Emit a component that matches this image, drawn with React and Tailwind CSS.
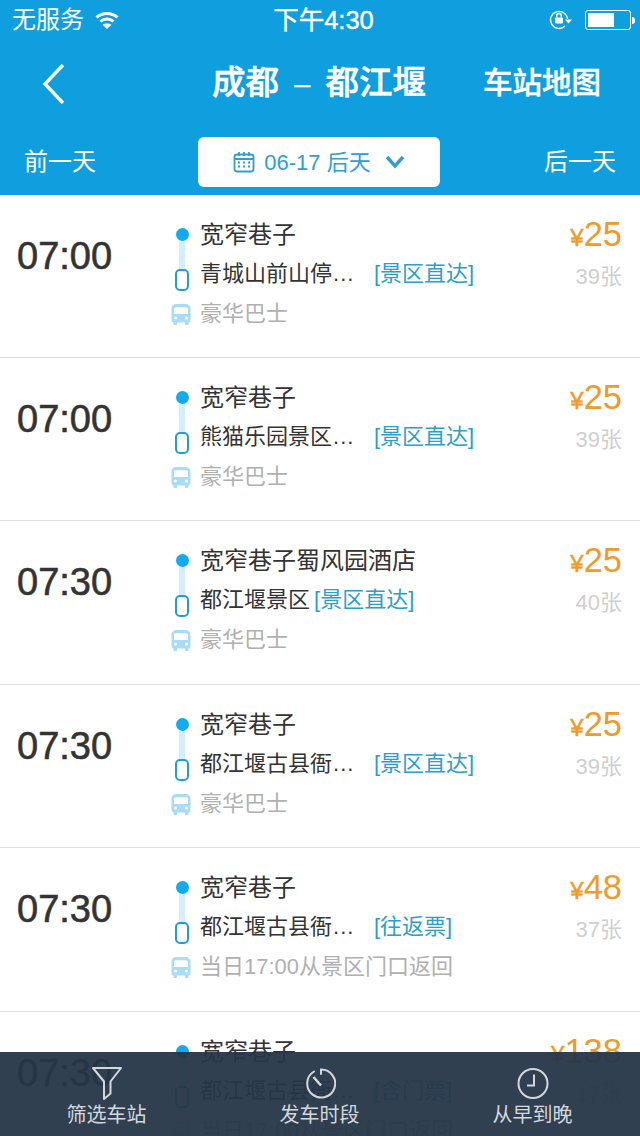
const FONT = { fontFamily: '"Liberation Sans", "Noto Sans CJK SC", sans-serif' };

function Wifi() {
  return (
    <svg width="24" height="20" viewBox="0 0 24 20" fill="none" stroke="white" strokeWidth="3">
      <path d="M1.5 7.5 C7 2 17 2 22.5 7.5" />
      <path d="M5.5 11.5 C9 8.2 15 8.2 18.5 11.5" />
      <path d="M12 19 L7.5 14.8 C10 13 14 13 16.5 14.8 Z" fill="white" stroke="none" />
    </svg>
  );
}

function RotationLock() {
  return (
    <svg width="24" height="22" viewBox="0 0 24 22" fill="none" stroke="white" strokeWidth="1.4">
      <path d="M18.5 10 A8.5 8.5 0 1 0 16 17" />
      <path d="M16 10.5 L23 10.5 L19.5 14.5 Z" fill="white" stroke="none" />
      <rect x="6" y="8.5" width="8" height="6" rx="1" fill="white" stroke="none" />
      <path d="M7.7 8.5 V6.8 A2.3 2.3 0 0 1 12.3 6.8 V8.5" />
    </svg>
  );
}

function Battery() {
  return (
    <div className="flex items-center">
      <div className="flex h-[20px] w-[46px] rounded-[3px] border border-white p-[2px]">
        <div className="h-full w-[26px] bg-white" />
      </div>
      <div className="ml-[1px] h-[7px] w-[3px] rounded-r-sm bg-white" />
    </div>
  );
}

function Calendar() {
  return (
    <svg width="22" height="22" viewBox="0 0 22 22" fill="none" stroke="#2e9fcf" strokeWidth="1.8">
      <rect x="1.5" y="3.5" width="19" height="17" rx="2.5" />
      <path d="M1.5 8 H20.5 M6 1 V5 M11 1 V5 M16 1 V5" />
      <path d="M5 11.5 H7 M10 11.5 H12 M15 11.5 H17 M5 15.5 H7 M10 15.5 H12 M15 15.5 H17" />
    </svg>
  );
}

function Bus() {
  return (
    <svg width="20" height="24" viewBox="0 0 20 24" fill="#a9ddf7">
      <path d="M6 1 H14 C17.5 1 19.5 3 19.5 6 V17 C19.5 18.5 18.5 19.5 17 19.5 H3 C1.5 19.5 0.5 18.5 0.5 17 V6 C0.5 3 2.5 1 6 1 Z M3 6.5 V11 H17 V6.5 C17 5.2 16.2 4.3 15 4.3 H5 C3.8 4.3 3 5.2 3 6.5 Z" fillRule="evenodd" />
      <rect x="2.5" y="18" width="3.5" height="4" rx="1" />
      <rect x="14" y="18" width="3.5" height="4" rx="1" />
      <circle cx="4.5" cy="15" r="1.5" fill="white" />
      <circle cx="15.5" cy="15" r="1.5" fill="white" />
    </svg>
  );
}

function Filter() {
  return (
    <svg width="32" height="35" viewBox="0 0 32 35" fill="none" stroke="#d4d8dc" strokeWidth="2">
      <path d="M2 2 H30 L19.5 15.5 V27.5 L13 33 V15.5 Z" strokeLinejoin="round" />
    </svg>
  );
}

function Stopwatch() {
  return (
    <svg width="32" height="35" viewBox="0 0 32 35" fill="none" stroke="#d4d8dc" strokeWidth="2">
      <path d="M10 5.5 A14 14 0 1 0 17 3.5 V8" strokeLinecap="round" />
      <path d="M9.5 11 L17 19.5" strokeWidth="2.6" />
    </svg>
  );
}

function Clock() {
  return (
    <svg width="32" height="35" viewBox="0 0 32 35" fill="none" stroke="#d4d8dc" strokeWidth="2">
      <circle cx="16" cy="17.5" r="14.5" />
      <path d="M17 8.5 V19.5 H10" />
    </svg>
  );
}

function Row({ time, from, to, cut, tag, tail, price, left }) {
  return (
    <div className="flex h-[163.4px] border-b border-[#dedede] bg-white">
      <div className="w-[172px] pl-[17px] pt-[38px] text-[38px] leading-[46px] text-[#333] [-webkit-text-stroke:0.6px_#333]">{time}</div>
      <div className="flex w-[20px] flex-col items-center pt-[33px]">
        <div className="h-[13px] w-[13px] rounded-full bg-[#12aaf0]" />
        <div className="h-[28px] w-[6px] bg-[#d2effb]" />
        <div className="h-[22px] w-[14px] rounded-[5px] border-2 border-[#1d9fd8] bg-white" />
        <div className="ml-[-2px] mt-[12px]"><Bus /></div>
      </div>
      <div className="ml-[8px] flex flex-1 flex-col pt-[22px]">
        <div className="h-[39px] text-[24px] leading-[36px] text-[#333]">{from}</div>
        <div className="flex h-[40px] items-start text-[22px] leading-[36px] text-[#333]">
          <span className={cut ? "w-[174px]" : "mr-[4px]"}>
            {to}
            {cut && <span className="ml-[1px] tracking-[1px]">...</span>}
          </span>
          <span className="text-[#2a9fcb]">{tag}</span>
        </div>
        <div className="text-[22px] leading-[36px] text-[#b0b0b0]">{tail}</div>
      </div>
      <div className="flex w-[130px] flex-col items-end pr-[18px] pt-[18px]">
        <div className="flex items-baseline text-[#f09a28]">
          <span className="text-[24px] leading-[42px] [-webkit-text-stroke:0.5px_#f09a28]">¥</span>
          <span className="text-[34.5px] leading-[42px]">{price}</span>
        </div>
        <div className="mt-[2px] text-[22px] leading-[32px] text-[#cfcfcf]">{left}</div>
      </div>
    </div>
  );
}

const rows = [
  { time: "07:00", from: "宽窄巷子", to: "青城山前山停", cut: true, tag: "[景区直达]", tail: "豪华巴士", price: "25", left: "39张" },
  { time: "07:00", from: "宽窄巷子", to: "熊猫乐园景区", cut: true, tag: "[景区直达]", tail: "豪华巴士", price: "25", left: "39张" },
  { time: "07:30", from: "宽窄巷子蜀风园酒店", to: "都江堰景区", cut: false, tag: "[景区直达]", tail: "豪华巴士", price: "25", left: "40张" },
  { time: "07:30", from: "宽窄巷子", to: "都江堰古县衙", cut: true, tag: "[景区直达]", tail: "豪华巴士", price: "25", left: "39张" },
  { time: "07:30", from: "宽窄巷子", to: "都江堰古县衙", cut: true, tag: "[往返票]", tail: "当日17:00从景区门口返回", price: "48", left: "37张" },
  { time: "07:30", from: "宽窄巷子", to: "都江堰古县衙", cut: true, tag: "[含门票]", tail: "当日17:00从景区门口返回", price: "138", left: "17张" },
];

function Tab({ icon, label }) {
  return (
    <div className="flex w-[213px] flex-col items-center pt-[14px]">
      {icon}
      <div className="mt-[1px] text-[20px] leading-[26px] text-[#d4d8dc]">{label}</div>
    </div>
  );
}

export default function App() {
  return (
    <div className="relative h-[1136px] w-[640px] overflow-hidden bg-white" style={FONT}>
      <header className="h-[194.6px] bg-[#0f9fde] text-white">
        <div className="flex h-[40px] items-center justify-between pl-[12px] pr-[5px] text-[24px]">
          <div className="flex w-[200px] items-center gap-[11px]"><span>无服务</span><Wifi /></div>
          <span className="text-[25.5px] [-webkit-text-stroke:0.4px_white]">下午4:30</span>
          <div className="flex w-[200px] items-center justify-end gap-[12px]"><RotationLock /><Battery /></div>
        </div>
        <div className="flex h-[97px] items-center pb-[10px]">
          <div className="w-[212px] pl-[42px]">
            <svg width="24" height="42" viewBox="0 0 24 42" fill="none" stroke="white" strokeWidth="3.4"><path d="M21 2 L3 21 L21 40" /></svg>
          </div>
          <div className="flex w-[214px] items-center justify-between text-[33.5px] font-medium whitespace-nowrap [-webkit-text-stroke:0.5px_white]">
            <span>成都</span><span className="text-[28px]">–</span><span>都江堰</span>
          </div>
          <div className="flex-1 pl-[57px] text-[29.5px] font-medium whitespace-nowrap [-webkit-text-stroke:0.4px_white]">车站地图</div>
        </div>
        <div className="flex h-[50px] items-center px-[24px] text-[24px]">
          <span className="w-[174px]">前一天</span>
          <div className="flex h-[50px] w-[242px] items-center justify-center gap-[9px] rounded-[6px] bg-white text-[#2e9fcf]">
            <Calendar />
            <span className="text-[22px]">06-17 后天</span>
            <svg className="ml-[5px]" width="20" height="14" viewBox="0 0 20 14" fill="none" stroke="#2e9fcf" strokeWidth="3.4"><path d="M2 2 L10 11 L18 2" /></svg>
          </div>
          <span className="ml-auto">后一天</span>
        </div>
      </header>
      <main>
        {rows.map((r, i) => <Row key={i} {...r} />)}
      </main>
      <footer className="absolute bottom-0 left-0 flex h-[84px] w-[640px] bg-[#263647]/95">
        <Tab icon={<Filter />} label="筛选车站" />
        <Tab icon={<Stopwatch />} label="发车时段" />
        <Tab icon={<Clock />} label="从早到晚" />
      </footer>
    </div>
  );
}
